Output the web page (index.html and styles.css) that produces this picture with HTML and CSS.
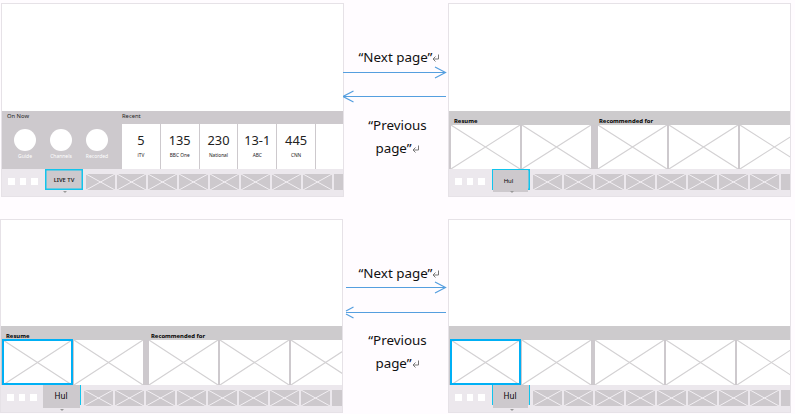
FILE: index.html
```html
<!DOCTYPE html>
<html lang="en">
<head>
<meta charset="utf-8">
<title>Page navigation</title>
<link rel="stylesheet" href="styles.css">
</head>
<body>
<main class="flow">
  <section class="screen live">
    <div class="stage"></div>
    <div class="shelf">
      <div class="now">
        <h2>On Now</h2>
        <div class="actions">
          <div class="action"><i></i><span>Guide</span></div>
          <div class="action"><i></i><span>Channels</span></div>
          <div class="action"><i></i><span>Recorded</span></div>
        </div>
      </div>
      <div class="recent">
        <h2>Recent</h2>
        <div class="channels">
          <div class="channel"><b>5</b><span>iTV</span></div>
          <div class="channel"><b>135</b><span>BBC One</span></div>
          <div class="channel"><b>230</b><span>National</span></div>
          <div class="channel"><b>13-1</b><span>ABC</span></div>
          <div class="channel"><b>445</b><span>CNN</span></div>
          <div class="channel"></div>
        </div>
      </div>
    </div>
    <nav class="bar"><div class="dots"><i></i><i></i><i></i></div><div class="tab">LIVE TV</div><div class="apps"></div></nav>
  </section>

  <section class="steps">
    <p class="next">“Next page”<svg class="ret" viewBox="0 0 8 8"><path d="M6.500 .5V5H1M3.500 2.500L1 5l2.500 2.500"/></svg></p>
    <svg class="arrows" viewBox="0 0 105 40"><path d="M0 8.500H102M92 3l10.500 5.500L92 14M103 32.500H1M10.500 27L0 32.500l10.500 5.500"/></svg>
    <p class="prev">“Previous<br>page”<svg class="ret" viewBox="0 0 8 8"><path d="M6.500 .5V5H1M3.500 2.500L1 5l2.500 2.500"/></svg></p>
  </section>

  <section class="screen hub">
    <div class="stage"></div>
    <div class="heads"><h3>Resume</h3><h3>Recommended for</h3></div>
    <div class="cards"></div>
    <nav class="bar"><div class="dots"><i></i><i></i><i></i></div><div class="tab"><span>Hul</span></div><div class="apps"></div></nav>
  </section>

  <section class="screen hub large left">
    <div class="stage"></div>
    <div class="heads"><h3>Resume</h3><h3>Recommended for</h3></div>
    <div class="cards selected"></div>
    <nav class="bar"><div class="dots"><i></i><i></i><i></i></div><div class="tab"><span>Hul</span></div><div class="apps"></div></nav>
  </section>

  <section class="steps lower">
    <p class="next">“Next page”<svg class="ret" viewBox="0 0 8 8"><path d="M6.500 .5V5H1M3.500 2.500L1 5l2.500 2.500"/></svg></p>
    <svg class="arrows" viewBox="0 0 105 40"><path d="M3 7.500H102M92 2l10.500 5.500L92 13M103 32.500H3M10.500 27L3 31M3 34l7.500 4"/></svg>
    <p class="prev">“Previous<br>page”<svg class="ret" viewBox="0 0 8 8"><path d="M6.500 .5V5H1M3.500 2.500L1 5l2.500 2.500"/></svg></p>
  </section>

  <section class="screen hub large right">
    <div class="stage"></div>
    <div class="heads"></div>
    <div class="cards selected"></div>
    <nav class="bar"><div class="dots"><i></i><i></i><i></i></div><div class="tab"><span>Hul</span></div><div class="apps"></div></nav>
  </section>
</main>
<script src="script.js"></script>
</body>
</html>
```

FILE: styles.css
```css
* { box-sizing: border-box; }
body { margin: 0; background: #fffcff; font-family: "Noto Sans", "Open Sans", sans-serif; color: #222; }
h2, h3, p { margin: 0; }
i { display: block; }
.flow {
  width: 795px; height: 414px; overflow: hidden;
  display: grid; grid-template-columns: 343px 104px 343px; grid-template-rows: 194px 194px;
  row-gap: 22px; padding: 3px 0 0 1px;
}
.screen {
  display: flex; flex-direction: column; width: 343px; height: 194px;
  border: 1px solid #e6e2e7; background: #fff; overflow: hidden;
}
.left { margin-left: -1px; }
.stage { height: 107px; flex: none; }

/* live tv shelf */
.shelf { height: 58px; flex: none; display: flex; background: #cdc9cd; }
.now { width: 120px; flex: none; padding: 1px 0 0 5px; }
h2 { font-size: 5.800px; font-weight: 400; line-height: 8px; height: 12px; }
.now h2 { margin-bottom: 5px; }
.actions { display: flex; }
.action { width: 36px; display: flex; flex-direction: column; align-items: center; }
.action i { width: 22px; height: 22px; border-radius: 50%; background: #fff; }
.action span { font-size: 5px; line-height: 7px; margin-top: 2px; color: #fff; }
.recent { padding-top: 1px; flex: 1; min-width: 0; }
.channels { display: flex; gap: 1px; height: 45px; }
.channel { width: 37.800px; flex: none; background: #fff; display: flex; flex-direction: column; align-items: center; padding-top: 8px; }
.channel b { font-size: 12.800px; font-weight: 400; line-height: 17px; }
.channel span { font-size: 4.800px; line-height: 7px; margin-top: 3px; }

/* bottom bar */
.bar { display: flex; flex: 1; background: #ece8ed; }
.dots { display: flex; gap: 5px; width: 43px; flex: none; padding: 9px 0 0 6px; }
.dots i { width: 6.500px; height: 6.500px; background: #fff; }
.tab {
  position: relative; width: 38px; height: 21px; flex: none; border: 1px solid #12c4ec; background: #cdc9cd;
  font-size: 5.800px; font-weight: 600; text-align: center; line-height: 20px; white-space: nowrap;
}
.tab::after {
  content: ""; position: absolute; left: 16.500px; top: 21px;
  border: 2px solid transparent; border-top-color: #999; border-bottom: 0;
}
.live .tab { box-shadow: inset 0 0 0 .5px #12c4ec; }
.apps { display: flex; gap: 2px; margin: 5px 0 0 3px; min-width: 0; overflow: hidden; }
.app { width: 29px; height: 16px; flex: none; background: #cdc9cd; }
.app svg, .card svg { display: block; width: 100%; height: 100%; }
.app path { stroke: #f2eff3; stroke-width: 1; fill: none; }
.card path { stroke: #d3d1d3; stroke-width: 1.100; fill: none; }

/* hub shelf */
.heads { height: 14px; flex: none; background: #cdcbcd; display: flex; padding: 6px 0 0 5px; }
h3 { font-size: 5.900px; font-weight: 700; line-height: 8px; color: #000; width: 145px; white-space: nowrap; }
.cards { display: flex; gap: 2px; height: 44px; flex: none; padding-left: 2px; background: #cdc9cd; }
.card { width: 69px; flex: none; background: #fff; }
.card:nth-child(2) { margin-right: 4.500px; }
.hub .tab { font-weight: 400; font-size: 6px; line-height: 22px; color: #000; }
.hub .tab span { display: block; width: 35px; height: 22px; background: #cdc9cd; padding-right: 4px; }
.hub:not(.large) .tab { box-shadow: inset 0 0 0 .5px #12c4ec; }
.large .stage { height: 106px; }
.large .heads { padding-top: 6px; }
.large .cards { height: 45px; }
.large .tab { height: 20px; border-top: 0; border-bottom: 0; font-size: 8px; }
.large .tab span { height: 23px; padding-right: 1px; }
.large .tab::after { top: 24px; }
.selected .card:first-child { position: relative; }
.selected .card:first-child::after { content: ""; position: absolute; inset: -1px -1px 0; border: 2px solid #00b0f5; }
.left .tab { border-left: 0; }
.left .tab span { width: 37px; }
.left .dots { width: 42px; }
.left .card:nth-child(2) { margin-right: 4px; }
.right .card:nth-child(2) { margin-right: 2px; }

/* transitions between screens */
.steps { padding-top: 44px; text-align: center; font-size: 13.400px; line-height: 20px; color: #111; }
.steps p { white-space: nowrap; }
.next { padding-left: 7px; }
.prev { padding-left: 3px; line-height: 23px; margin-top: 10px; }
.lower .prev { margin-top: 9px; }
.ret { width: 8px; height: 8px; margin-left: 0; }
.ret path { fill: none; stroke: #777; stroke-width: 1; }
.arrows { display: block; width: 105px; height: 40px; margin-left: -1px; margin-top: -3px; }
.arrows path { fill: none; stroke: #559fdf; stroke-width: 1.200; }
```

FILE: script.js
```js
function tiles(selector, count, name, w, h) {
  document.querySelectorAll(selector).forEach(function (row) {
    for (let n = 0; n < count; n++) {
      const tile = document.createElement('div');
      tile.className = name;
      const cross = n === 8 ? '' : `<path d="M0 0L${w} ${h}M${w} 0L0 ${h}"/>`;
      tile.innerHTML = `<svg viewBox="0 0 ${w} ${h}" preserveAspectRatio="none">${cross}</svg>`;
      row.append(tile);
    }
  });
}
tiles('.apps', 9, 'app', 29, 16);
tiles('.cards', 5, 'card', 69, 44);
```
